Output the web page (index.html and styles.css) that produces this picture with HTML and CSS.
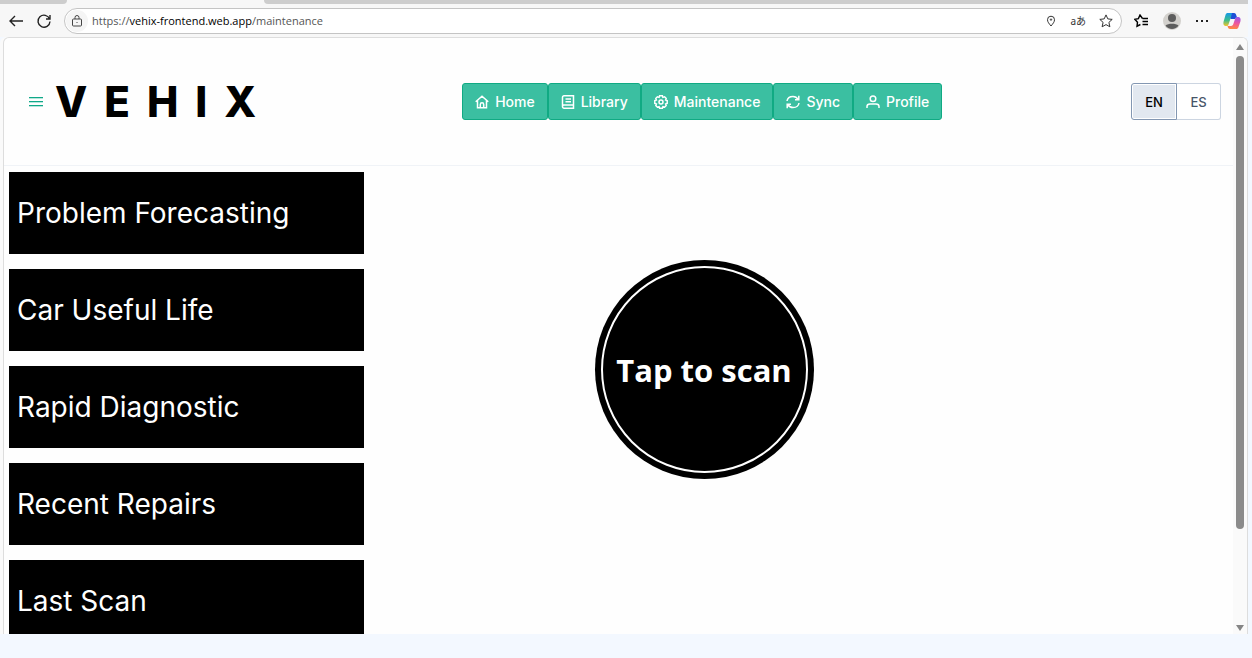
FILE: index.html
```html
<!DOCTYPE html>
<html lang="en">
<head>
<meta charset="utf-8">
<meta name="viewport" content="width=device-width, initial-scale=1">
<title>Vehix – Maintenance</title>
<link rel="stylesheet" href="styles.css">
</head>
<body>
<div class="browser">
  <div class="tabstrip"><span class="tab-left"></span><span class="tab-active"></span><span class="tab-rest"></span></div>
  <div class="toolbar">
    <button class="tool" aria-label="Back"><svg width="16" height="16" viewBox="0 0 16 16"><path d="M7 3 2 8l5 5M2 8h13"/></svg></button>
    <button class="tool" aria-label="Refresh"><svg width="16" height="16" viewBox="0 0 16 16"><path d="M13.6 6A6 6 0 1 0 14 8.500M14 2v4h-4"/></svg></button>
    <div class="address">
      <button class="site-info" aria-label="Site information"><svg width="12" height="12" viewBox="0 0 12 12"><rect x="1.500" y="4" width="9" height="7" rx="1"/><path d="M4 4V2.500a2 2 0 0 1 4 0V4M6 7v1"/></svg></button>
      <a class="url" href="#">https://<b>vehix-frontend.web.app</b>/maintenance</a>
      <button class="mini" aria-label="Location"><svg width="12" height="12" viewBox="0 0 12 12"><path d="M6 11C4 8.500 2.500 7 2.500 4.700a3.500 3.500 0 0 1 7 0C9.500 7 8 8.500 6 11Z"/><circle cx="6" cy="4.600" r=".7"/></svg></button>
      <button class="mini translate" aria-label="Translate">aあ</button>
      <button class="mini" aria-label="Favorite"><svg width="14" height="14" viewBox="0 0 14 14"><path d="m7 .9 1.800 4 4.400.5-3.300 3 1 4.400L7 10.600l-3.900 2.200 1-4.400-3.300-3 4.400-.5Z"/></svg></button>
    </div>
    <div class="tools-right">
      <button class="tool dark" aria-label="Favorites"><svg width="14" height="14" viewBox="0 0 14 14"><path d="M8.500 4.500 6 1 4.400 4.600.8 5.300l2.700 2.900-.5 4 3.400-1.700M8.500 4.500H14M8.500 7.500H14M8.500 10.500H14"/></svg></button>
      <button class="tool" aria-label="Account"><svg width="18" height="18" viewBox="0 0 18 18"><circle cx="9" cy="9" r="9" class="av-bg"/><circle cx="9" cy="6" r="4" class="av-fg"/><path d="M2.500 13.500C5 11 13 11 15.500 13.500 13 18 5 18 2.500 13.500Z" class="av-fg"/></svg></button>
      <button class="tool" aria-label="More"><svg width="12" height="14" viewBox="0 0 12 14"><path class="dots" d="M0 7h2M5 7h2M10 7h2"/></svg></button>
      <button class="tool copilot" aria-label="Copilot"><svg width="18" height="18" viewBox="0 0 18 18">
        <defs>
          <linearGradient id="ca" x1="0" y1="0" x2="0" y2="1"><stop offset="0" stop-color="#1598e8"/><stop offset=".55" stop-color="#3bbd8c"/><stop offset="1" stop-color="#f5c52a"/></linearGradient>
          <linearGradient id="cb" x1=".6" y1="0" x2=".4" y2="1"><stop offset="0" stop-color="#9b57e8"/><stop offset=".5" stop-color="#f0559c"/><stop offset="1" stop-color="#ff8a3c"/></linearGradient>
        </defs>
        <path fill="url(#cb)" d="M13 17H7c-1.500 0-2-1-2.500-3H8c1.500 0 2-1 2.500-2.500L12 7c.5-1.500 1-2 2.500-2 3 0 3.500 2 2.900 4.500L15.500 15c-.5 1.400-1.100 2-2.500 2Z"/>
        <path fill="url(#ca)" d="M5 1h6L7.500 6.500 6 11c-.7 2.500-1 3-2.500 3C.5 14 0 12 .6 9.500L2.500 3C3 1.600 3.600 1 5 1Z"/>
        <path fill="#1d4fd7" d="M9 1h2c1.500 0 2 1 2.500 3l.4 1.100c-1 .2-1.500.9-1.900 1.900H7.400L8.500 3Z"/></svg></button>
    </div>
  </div>

  <div class="viewport">
    <div class="page">
      <header class="header">
        <div class="brand">
          <button class="menu" aria-label="Open menu"><svg width="14" height="10" viewBox="0 0 14 10"><path class="glow" d="M0 1h14M0 5h14M0 9h14"/><path d="M0 .5h14M0 4.500h14M0 8.500h14"/></svg></button>
          <h1 class="logo">VEHIX</h1>
        </div>
        <nav class="nav">
          <button><svg width="14" height="14" viewBox="0 0 14 14"><path d="m.7 6.700 6.300-5.500 6.300 5.500M2.500 5.500v7.300h9V5.500M5.300 12.500v-3a1.700 1.700 0 0 1 3.400 0v3"/></svg>Home</button>
          <button><svg width="14" height="14" viewBox="0 0 14 14"><path d="M3 .8h9.500v12.400H3A1.500 1.500 0 0 1 1.500 11.700V2.300A1.500 1.500 0 0 1 3 .8ZM1.500 11A1.300 1.300 0 0 1 3 10h9.500M4.500 4H10M4.500 6.800H10"/></svg>Library</button>
          <button><svg width="14" height="14" viewBox="0 0 14 14"><path d="M5.600.8h2.800l.5 1.600 1.700-.6 1.600 1.600-.6 1.700 1.600.5v2.800l-1.600.5.6 1.700-1.600 1.600-1.700-.6-.5 1.600H5.600l-.5-1.600-1.700.6-1.600-1.600.6-1.700L.8 8.400V5.600l1.600-.5-.6-1.700 1.600-1.600 1.700.6Z"/><circle cx="7" cy="7" r="2"/></svg>Maintenance</button>
          <button><svg width="14" height="14" viewBox="0 0 14 14"><path d="M1 6C1.500 2.800 4.200 1.500 7 1.500c2.300 0 4 1 5.300 3M12.800.8v4H9M13 8c-.5 3.200-3.200 4.500-6 4.500-2.300 0-4-1-5.300-3M1.200 13.200v-4H5"/></svg>Sync</button>
          <button><svg width="14" height="14" viewBox="0 0 14 14"><circle cx="7" cy="3.800" r="2.800"/><path d="M1 13v-1.500C1 9.800 2.200 9 4 9h6c1.800 0 3 .8 3 2.500V13"/></svg>Profile</button>
        </nav>
        <div class="lang">
          <button class="selected" aria-pressed="true">EN</button>
          <button aria-pressed="false">ES</button>
        </div>
      </header>
      <main class="content">
        <div class="cards">
          <button>Problem Forecasting</button>
          <button>Car Useful Life</button>
          <button>Rapid Diagnostic</button>
          <button>Recent Repairs</button>
          <button>Last Scan</button>
        </div>
        <div class="scan-area"><button class="scan"><span>Tap to scan</span></button></div>
      </main>
    </div>
    <div class="scrollbar">
      <svg width="10" height="8" viewBox="0 0 10 8"><path d="M1 7 5 1l4 6Z"/></svg>
      <div class="track"><div class="thumb"></div></div>
      <svg width="10" height="8" viewBox="0 0 10 8"><path d="m1 1 4 6 4-6Z"/></svg>
    </div>
  </div>
</div>
</body>
</html>
```
FILE: styles.css
```css
* { box-sizing: border-box; }
body { margin: 0; background: #f3f8ff; font-family: Inter, "Liberation Sans", sans-serif; color: #000; }
button { margin: 0; padding: 0; border: 0; background: none; font: inherit; color: inherit; cursor: pointer; }
svg { display: block; flex: none; fill: none; stroke: currentColor; }

.browser { height: 100vh; padding: 0 4px 24px 0; display: flex; flex-direction: column; }
.tabstrip { flex: none; height: 4px; display: flex; background: #f7f7f7; }
.tab-left, .tab-rest { background: #cdcdcd; height: 4px; }
.tab-left { width: 67px; border-bottom-right-radius: 4px; }
.tab-active { width: 197px; }
.tab-rest { flex: 1; border-bottom-left-radius: 4px; }

.toolbar { flex: none; height: 33px; padding: 0 7px 0 8px; display: flex; align-items: center; gap: 12px; background: #f7f7f7; color: #222; }
.tool { display: flex; }
.tool svg { stroke-width: 1.4; }
.dark { color: #000; }
.tool .dots { stroke-width: 2; }
.av-bg { fill: #d3d1cd; stroke: none; }
.av-fg { fill: #5d5d5d; stroke: none; }
.copilot svg { stroke: none; }
.address { flex: 1; height: 26px; padding: 0 8px 0 1px; display: flex; align-items: center; gap: 13px; border: 1px solid #c4c4c4; border-radius: 13px; background: #fff; }
.site-info { width: 22px; height: 22px; display: flex; align-items: center; justify-content: center; border-radius: 11px; background: #f5f5f5; color: #444; }
.url { flex: 1; margin-left: -9px; color: #555; font: 11px/16px "Open Sans", "Noto Sans", sans-serif; text-decoration: none; white-space: nowrap; }
.url b { color: #000; font-weight: 400; }
.mini { display: flex; color: #333; }
.translate { font: 10px/16px "Noto Sans", "Noto Sans CJK JP", sans-serif; }
.tools-right { display: flex; align-items: center; gap: 15px; }

.viewport { flex: 1; min-height: 0; margin-left: 3px; display: flex; overflow: hidden; background: #fefefe; border: solid #ddd; border-width: 1px 1px 0 1px; border-radius: 6px 6px 0 0; box-shadow: -3px 0 #fafafa; }
.page { flex: 1; min-width: 0; overflow: hidden; }

.header { height: 128px; padding: 0 12px 0 25px; display: flex; align-items: center; justify-content: space-between; border-bottom: 1px solid #f0f3f7; }
.brand { display: flex; align-items: center; gap: 12px; }
.menu { color: #10a888; }
.menu svg { stroke-width: 1; }
.menu .glow { stroke: #b5e6dc; stroke-width: 2; }
.logo { margin: 0; font-size: 42px; line-height: 48px; font-weight: 800; letter-spacing: 17px; }
.nav { display: flex; }
.nav button { height: 37px; padding: 0 12px; display: flex; align-items: center; gap: 6px; border: 1px solid #10aa83; border-radius: 3px; background: #3bbfa1; color: #fff; font-size: 14px; line-height: 20px; font-weight: 500; }
.nav svg { stroke-width: 1.5; }
.lang { display: flex; }
.lang button { width: 44px; height: 37px; border: 1px solid #ccd5e1; border-left: 0; border-radius: 0 3px 3px 0; background: #fff; color: #475569; font-size: 13px; line-height: 20px; font-weight: 500; }
.lang .selected { width: 46px; border: 1px solid #8397b2; border-radius: 3px 0 0 3px; background: #e2e8f0; color: #000; box-shadow: inset 0 0 0 1px #fff; }

.content { padding: 6px 0 0 5px; display: grid; grid-template-columns: 355fr 680fr 189fr; align-items: start; }
.cards { display: flex; flex-direction: column; gap: 15px; }
.cards button { height: 82px; padding: 0 8px; background: #000; color: #fff; font-size: 28px; line-height: 36px; text-align: left; white-space: nowrap; }
.scan-area { display: flex; justify-content: center; padding-top: 88px; }
.scan { width: 219px; height: 219px; padding: 6px; border-radius: 50%; background: #000; color: #fff; }
.scan span { height: 100%; display: flex; align-items: center; justify-content: center; border: 2px solid #fff; border-radius: 50%; font: 700 31px/40px "Open Sans", "Noto Sans", sans-serif; white-space: nowrap; }

.scrollbar { flex: none; width: 14px; padding: 5px 0 2px; display: flex; flex-direction: column; align-items: center; gap: 5px; background: #fafafa; }
.scrollbar svg { fill: #858585; stroke: none; }
.track { flex: 1; width: 8px; }
.thumb { height: 84%; border-radius: 4px; background: #8b8b8b; }
```
